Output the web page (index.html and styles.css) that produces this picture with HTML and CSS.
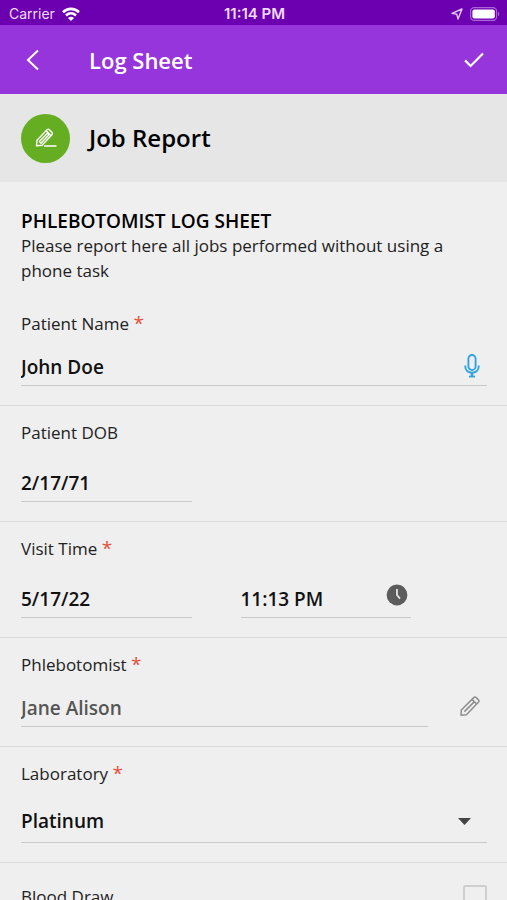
FILE: index.html
```html
<!DOCTYPE html>
<html lang="en">
<head>
  <meta charset="UTF-8">
  <meta name="viewport" content="width=device-width, initial-scale=1.0">
  <title>Log Sheet</title>
  <link rel="stylesheet" href="styles.css">
</head>
<body>
  <div class="status-bar">
    <div class="status-left">
      <span>Carrier</span>
      <svg width="18" height="14" viewBox="0 0 18 14" fill="none" stroke="#fff" stroke-width="2.6">
        <path d="M1 5.2C5.6 .7 12.4 .7 17 5.2"/>
        <path d="M4 8.5C6.9 5.7 11.1 5.7 14 8.5"/>
        <path d="M9 14L5.9 10.9C7.6 9.3 10.4 9.3 12.1 10.9Z" fill="#fff" stroke="none"/>
      </svg>
    </div>
    <span class="status-time">11:14 PM</span>
    <div class="status-right">
      <svg width="12" height="12" viewBox="0 0 12 12" fill="none" stroke="#e3c8f5" stroke-width="1.4" stroke-linejoin="round">
        <path d="M11 1L7 11L5.8 6.2L1 5.4Z"/>
      </svg>
      <svg width="30" height="14" viewBox="0 0 30 14">
        <rect x=".6" y=".6" width="26" height="12.8" rx="3.6" fill="none" stroke="#a866d6" stroke-width="1.2"/>
        <rect x="2.4" y="2.4" width="22.4" height="9.2" rx="2" fill="#fff"/>
        <path d="M28 4.8C29.8 5.5 29.8 8.5 28 9.2Z" fill="#a866d6"/>
      </svg>
    </div>
  </div>

  <header class="header">
    <button class="icon-btn back" aria-label="Back">
      <svg width="14" height="22" viewBox="0 0 14 22" fill="none" stroke="#fff" stroke-width="2"><path d="M12 1.5L2 11L12 20.5"/></svg>
    </button>
    <h1>Log Sheet</h1>
    <button class="icon-btn" aria-label="Save">
      <svg width="20" height="16" viewBox="0 0 20 16" fill="none" stroke="#fff" stroke-width="2.2"><path d="M1 8.4L6.6 14L19 1.4"/></svg>
    </button>
  </header>

  <div class="title-bar">
    <div class="badge">
      <svg width="22" height="20" viewBox="0 0 22 20" fill="none" stroke="#fff" stroke-width="1.4" stroke-linejoin="round" stroke-linecap="round">
        <path d="M1.5 17.8L2 12.2L12 1.8Q13.2 .8 14.5 1.9L16.8 4.2Q17.9 5.5 16.9 6.7L7 17.2Z"/>
        <path d="M4.4 13.6L12.4 5.2L14 6.8L6 15.2ZM11.4 3L15.8 7.4"/>
        <path d="M9.5 18H21"/>
      </svg>
    </div>
    <h2>Job Report</h2>
  </div>

  <main class="form">
    <section class="intro">
      <h3>PHLEBOTOMIST LOG SHEET</h3>
      <p>Please report here all jobs performed without using a phone task</p>
    </section>

    <section class="field">
      <label for="patient">Patient Name <span class="req">*</span></label>
      <div class="row line">
        <input id="patient" type="text" value="John Doe">
        <button class="icon-btn mic" aria-label="Dictate">
          <svg width="16" height="24" viewBox="0 0 16 24" fill="none" stroke="#30a5dc">
            <rect x="4.4" y="1" width="7.2" height="15" rx="3.6" stroke-width="1.9"/>
            <path d="M1.3 11.5V12.5C1.3 16.2 4 18.6 8 18.6S14.7 16.2 14.7 12.5V11.5" stroke-width="1.9"/>
            <path d="M8 18.6V22" stroke-width="2.6"/>
            <path d="M5 22.6H11" stroke-width="1.8"/>
          </svg>
        </button>
      </div>
    </section>

    <section class="field tall">
      <label for="dob">Patient DOB</label>
      <div class="columns">
        <div class="row line"><input id="dob" type="text" value="2/17/71"></div>
      </div>
    </section>

    <section class="field tall">
      <label for="visit-date">Visit Time <span class="req">*</span></label>
      <div class="columns">
        <div class="row line"><input id="visit-date" type="text" value="5/17/22"></div>
        <div class="row line">
          <input type="text" value="11:13 PM" aria-label="Visit hour">
          <button class="icon-btn clock" aria-label="Set current time">
            <svg width="22" height="22" viewBox="0 0 22 22" fill="none">
              <circle cx="11" cy="11" r="10.4" fill="#5c5c5c"/>
              <path d="M11 5V11L14 14.6" stroke="#e4e4e4" stroke-width="1.8"/>
            </svg>
          </button>
        </div>
      </div>
    </section>

    <section class="field">
      <label for="phleb">Phlebotomist <span class="req">*</span></label>
      <div class="row">
        <div class="row line grow"><input id="phleb" class="muted" type="text" value="Jane Alison" readonly></div>
        <button class="icon-btn edit" aria-label="Edit phlebotomist">
          <svg width="20" height="20" viewBox="0 0 20 20" fill="none" stroke="#8e8e8e" stroke-width="1.5" stroke-linejoin="round">
            <path d="M1 19.2L1.3 14L14 1.4Q15 .6 16 1.4L18.6 4Q19.4 5 18.6 6L6.4 18.8Z"/>
            <path d="M4.4 15.6L14.4 5.6M12 3.4L16.6 8"/>
          </svg>
        </button>
      </div>
    </section>

    <section class="field tall">
      <label for="lab">Laboratory <span class="req">*</span></label>
      <div class="row line select-row">
        <select id="lab">
          <option>Platinum</option>
        </select>
        <svg class="arrow" width="13" height="7" viewBox="0 0 13 7"><path d="M0 0H13L6.5 7Z" fill="#444"/></svg>
      </div>
    </section>

    <section class="check">
      <label for="blood">Blood Draw</label>
      <input id="blood" type="checkbox">
    </section>
  </main>
</body>
</html>
```

FILE: styles.css
```css
* {
  box-sizing: border-box;
}

body {
  margin: 0;
  height: 100vh;
  overflow: hidden;
  display: flex;
  flex-direction: column;
  background-color: #efefef;
  color: #222;
  font-family: "Open Sans", "Noto Sans", sans-serif;
  font-size: 17px;
  line-height: 24px;
}

h1, h2, h3, p {
  margin: 0;
  font-weight: 600;
}

.status-bar {
  flex: none;
  display: grid;
  grid-template-columns: 1fr auto 1fr;
  align-items: center;
  height: 25px;
  padding: 2px 7px 0 9px;
  background-color: #6c00b0;
  color: #f0dcfa;
  font-family: Inter, sans-serif;
  font-size: 14px;
}

.status-left,
.status-right {
  display: flex;
  align-items: center;
  gap: 7px;
}

.status-right {
  justify-content: flex-end;
}

.status-time {
  font-size: 15px;
  font-weight: 600;
}

.header {
  flex: none;
  display: flex;
  align-items: center;
  height: 69px;
  padding: 0 23px 0 26px;
  background-color: #9635dc;
  color: white;
}

.header h1 {
  flex: 1;
  margin-left: 49px;
  font-size: 22px;
  line-height: 30px;
}

.icon-btn {
  flex: none;
  display: flex;
  padding: 0;
  border: none;
  background: none;
  cursor: pointer;
}

.title-bar {
  flex: none;
  display: flex;
  align-items: center;
  gap: 19px;
  height: 88px;
  padding: 0 21px;
  background-color: #e6e6e6;
  color: black;
}

.title-bar h2 {
  font-size: 24px;
  line-height: 34px;
}

.badge {
  display: flex;
  align-items: center;
  justify-content: center;
  width: 49px;
  height: 49px;
  border-radius: 50%;
  background-color: #65ae22;
}

.form {
  flex: 1;
  overflow-y: auto;
  scrollbar-width: none;
}

.intro {
  padding: 27px 20px 0 21px;
}

.intro h3 {
  font-size: 19px;
  color: black;
}

.intro p {
  font-weight: 400;
  line-height: 25px;
}

.field {
  padding: 15px 20px 19px 21px;
  border-bottom: 1px solid #dcdcdc;
}

.intro + .field {
  padding-top: 29px;
}

.field label {
  display: block;
  margin-bottom: 11px;
}

.field.tall label {
  margin-bottom: 18px;
}

.req {
  color: #e2503c;
  font-size: 19px;
  line-height: 1;
}

.row {
  display: flex;
  align-items: center;
}

.line {
  border-bottom: 1px solid #c9c9c9;
}

.grow {
  flex: 1;
}

.columns {
  display: grid;
  grid-template-columns: repeat(2, minmax(0, 1fr));
  gap: 49px;
  padding-right: 76px;
}

/* side padding keeps the tail of a leading J from being clipped */
.row input,
.row select {
  flex: 1;
  min-width: 0;
  height: 38px;
  margin-left: -3px;
  padding: 2px 0 0 3px;
  border: none;
  outline: none;
  background: none;
  appearance: none;
  color: #111;
  font-family: inherit;
  font-size: 19px;
  font-weight: 600;
}

.row .muted {
  color: #555;
}

.mic {
  margin-right: 7px;
}

.clock {
  margin: 0 3px 6px 0;
}

.edit {
  margin: 0 7px 3px 32px;
}

.select-row {
  padding-bottom: 3px;
  margin-top: -3px;
}

.arrow {
  margin: 3px 16px 0 0;
}

.check {
  display: flex;
  align-items: center;
  justify-content: space-between;
  padding: 22px 20px 22px 21px;
}

.check input {
  width: 24px;
  height: 24px;
  margin: 0;
  appearance: none;
  border: 2px solid #cfcfcf;
  border-radius: 2px;
}
```
